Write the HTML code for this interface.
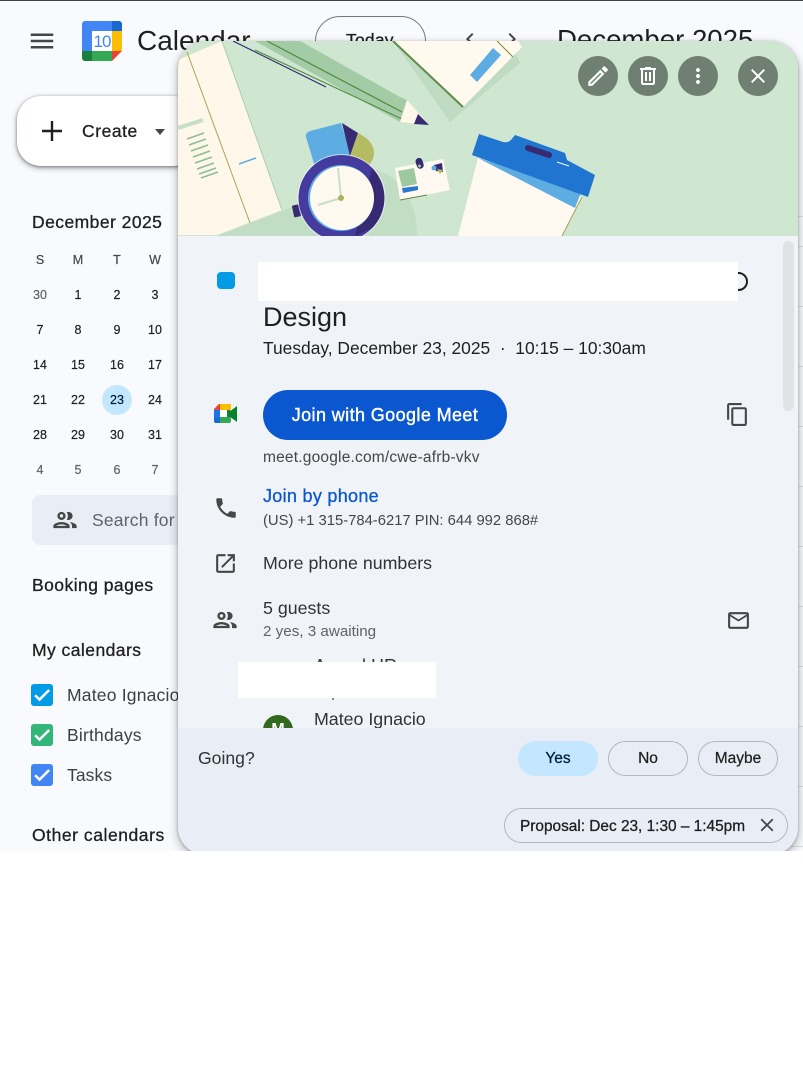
<!DOCTYPE html>
<html><head><meta charset="utf-8"><style>
html,body{margin:0;padding:0;background:#fff;}
body{width:803px;height:1080px;overflow:hidden;position:relative;font-family:"Liberation Sans",sans-serif;color:#1f1f1f;}
#page{position:absolute;left:0;top:0;width:803px;height:851px;overflow:hidden;background:#f8fafd;}
#bar{position:absolute;left:0;top:0;width:803px;height:1px;background:#444;}
.t{position:absolute;white-space:nowrap;line-height:24px;height:24px;}
.m{-webkit-text-stroke:.3px currentColor;}
.c{position:absolute;width:38px;margin-left:-19px;text-align:center;font-size:12.5px;line-height:20px;height:20px;-webkit-text-stroke:.2px currentColor;}
svg.i{position:absolute;}
.ln{position:absolute;left:790px;width:13px;height:1px;background:#dadce0;}
.cb{position:absolute;left:31px;width:22px;height:22px;border-radius:3px;}
.cb svg{position:absolute;left:1px;top:1px;}
#pop{position:absolute;left:178px;top:41px;width:620px;height:814px;border-radius:28px;background:#f0f4f9;overflow:hidden;box-shadow:0 4px 8px 3px rgba(0,0,0,.15),0 1px 3px rgba(0,0,0,.3);}
#in{position:absolute;left:-178px;top:-41px;width:803px;height:900px;}
.rb{position:absolute;width:40px;height:40px;top:56px;border-radius:50%;background:#6f7f72;}
.rb svg{position:absolute;left:8px;top:8px;}
.pill{position:absolute;top:741px;width:78px;height:33px;border:1px solid #b4b8bc;border-radius:18px;text-align:center;font-size:15.5px;line-height:33px;color:#1f1f1f;-webkit-text-stroke:.25px currentColor;}
</style></head><body>
<div id="page">
<div id="bar"></div>
<div class="ln" style="top:216px"></div><div class="ln" style="top:246px"></div><div class="ln" style="top:306px"></div><div class="ln" style="top:366px"></div><div class="ln" style="top:426px"></div><div class="ln" style="top:486px"></div><div class="ln" style="top:546px"></div><div class="ln" style="top:606px"></div><div class="ln" style="top:666px"></div><div class="ln" style="top:726px"></div><div class="ln" style="top:786px"></div><div class="ln" style="top:846px"></div>

<svg class="i" style="left:27px;top:26px" width="30" height="30" viewBox="0 0 24 24" fill="#444746"><path d="M3 18h18v-2H3v2zm0-5h18v-2H3v2zm0-7v2h18V6H3z"/></svg>

<svg class="i" style="left:82px;top:21px" width="40" height="40" viewBox="0 0 40 40">
<path d="M3 0H30V10H10V30H0V3a3 3 0 0 1 3-3z" fill="#4285f4"/>
<path d="M30 0h7a3 3 0 0 1 3 3v7H30z" fill="#1967d2"/>
<rect x="30" y="10" width="10" height="20" fill="#fbbc04"/>
<path d="M10 30H30V40H10z" fill="#34a853"/>
<path d="M0 30H10V40H3a3 3 0 0 1-3-3z" fill="#188038"/>
<path d="M30 30H40L30 40z" fill="#ea4335"/>
<rect x="10" y="10" width="20" height="20" fill="#fff"/>
<text x="20" y="26" font-family="Liberation Sans" font-size="17" fill="#4285f4" text-anchor="middle" letter-spacing="-1">10</text>
</svg>
<div class="t" style="left:137px;top:27px;height:28px;line-height:28px;font-size:28px;color:#1f1f1f">Calendar</div>

<div style="position:absolute;left:315px;top:16px;width:109px;height:60px;border:1px solid #747775;border-radius:25px;"></div>
<div class="t m" style="left:346px;top:28px;font-size:17.5px;letter-spacing:.2px">Today</div>
<svg class="i" style="left:458px;top:27px" width="24" height="24" viewBox="0 0 24 24" fill="#444746"><path d="M15.41 7.41L14 6l-6 6 6 6 1.41-1.41L10.83 12z"/></svg>
<svg class="i" style="left:500px;top:27px" width="24" height="24" viewBox="0 0 24 24" fill="#444746"><path d="M8.59 16.59L10 18l6-6-6-6-1.41 1.41L13.17 12z"/></svg>
<div class="t" style="left:557px;top:26px;font-size:27.6px;line-height:28px;height:28px;">December 2025</div>

<div style="position:absolute;left:17px;top:96px;width:180px;height:70px;border-radius:24px;background:#fff;box-shadow:0 1px 3px rgba(0,0,0,.4),0 2px 6px 1px rgba(0,0,0,.2);"></div>
<svg class="i" style="left:38px;top:117px" width="28" height="28" viewBox="0 0 28 28"><path d="M14 4v20M4 14h20" stroke="#1f1f1f" stroke-width="2.4"/></svg>
<div class="t m" style="left:82px;top:119px;font-size:17.5px;letter-spacing:.55px">Create</div>
<svg class="i" style="left:155px;top:129px" width="10" height="6" viewBox="0 0 10 6"><path d="M0 0h10L5 6z" fill="#444746"/></svg>

<div class="t m" style="left:32px;top:210px;font-size:17.5px;letter-spacing:.45px">December 2025</div>

<div style="position:absolute;left:102px;top:385px;width:30px;height:30px;border-radius:50%;background:#c2e7ff"></div>

<div class="c" style="left:40px;top:250px;color:#444746">S</div><div class="c" style="left:78px;top:250px;color:#444746">M</div><div class="c" style="left:117px;top:250px;color:#444746">T</div><div class="c" style="left:155px;top:250px;color:#444746">W</div>
<div class="c" style="left:40px;top:285px;color:#5f6368">30</div><div class="c" style="left:78px;top:285px">1</div><div class="c" style="left:117px;top:285px">2</div><div class="c" style="left:155px;top:285px">3</div>
<div class="c" style="left:40px;top:320px">7</div><div class="c" style="left:78px;top:320px">8</div><div class="c" style="left:117px;top:320px">9</div><div class="c" style="left:155px;top:320px">10</div>
<div class="c" style="left:40px;top:355px">14</div><div class="c" style="left:78px;top:355px">15</div><div class="c" style="left:117px;top:355px">16</div><div class="c" style="left:155px;top:355px">17</div>
<div class="c" style="left:40px;top:390px">21</div><div class="c" style="left:78px;top:390px">22</div><div class="c" style="left:117px;top:390px;color:#001d35">23</div><div class="c" style="left:155px;top:390px">24</div>
<div class="c" style="left:40px;top:425px">28</div><div class="c" style="left:78px;top:425px">29</div><div class="c" style="left:117px;top:425px">30</div><div class="c" style="left:155px;top:425px">31</div>
<div class="c" style="left:40px;top:460px;color:#5f6368">4</div><div class="c" style="left:78px;top:460px;color:#5f6368">5</div><div class="c" style="left:117px;top:460px;color:#5f6368">6</div><div class="c" style="left:155px;top:460px;color:#5f6368">7</div>

<div style="position:absolute;left:32px;top:495px;width:160px;height:50px;border-radius:8px;background:#e9eef6"></div>
<svg class="i" style="left:51px;top:506px" width="28" height="28" viewBox="0 0 24 24" fill="#444746"><path d="M9 13.75c-2.34 0-7 1.17-7 3.5V19h14v-1.75c0-2.33-4.66-3.5-7-3.5zM4.34 17c.84-.58 2.87-1.25 4.66-1.25s3.82.67 4.66 1.25H4.34zM9 12c1.93 0 3.5-1.57 3.5-3.5S10.93 5 9 5 5.5 6.57 5.5 8.5 7.07 12 9 12zm0-5c.83 0 1.5.67 1.5 1.5S9.83 10 9 10s-1.5-.67-1.5-1.5S8.17 7 9 7zm7.04 6.81c1.16.84 1.96 1.96 1.96 3.44V19h4v-1.75c0-2.02-3.5-3.17-5.96-3.44zM15 12c1.93 0 3.5-1.57 3.5-3.5S16.93 5 15 5c-.54 0-1.04.13-1.5.35.63.89 1 1.98 1 3.15s-.37 2.26-1 3.15c.46.22.96.35 1.5.35z"/></svg>
<div class="t" style="left:92px;top:508px;font-size:17.5px;letter-spacing:.2px;color:#5f6368;">Search for people</div>

<div class="t m" style="left:32px;top:573px;font-size:17.5px;letter-spacing:.45px">Booking pages</div>
<div class="t m" style="left:32px;top:638px;font-size:17.5px;letter-spacing:.45px">My calendars</div>

<div class="cb" style="top:684px;background:#039be5"><svg width="20" height="20" viewBox="0 0 24 24" fill="#fff"><path d="M9 16.17L4.83 12l-1.42 1.41L9 19 21 7l-1.41-1.41z" stroke="#fff"/></svg></div>
<div class="t" style="left:67px;top:683px;font-size:17.5px;letter-spacing:.2px;color:#3c4043">Mateo Ignacio</div>
<div class="cb" style="top:724px;background:#33b679"><svg width="20" height="20" viewBox="0 0 24 24" fill="#fff"><path d="M9 16.17L4.83 12l-1.42 1.41L9 19 21 7l-1.41-1.41z" stroke="#fff"/></svg></div>
<div class="t" style="left:67px;top:723px;font-size:17.5px;letter-spacing:.2px;color:#3c4043">Birthdays</div>
<div class="cb" style="top:764px;background:#4285f4"><svg width="20" height="20" viewBox="0 0 24 24" fill="#fff"><path d="M9 16.17L4.83 12l-1.42 1.41L9 19 21 7l-1.41-1.41z" stroke="#fff"/></svg></div>
<div class="t" style="left:67px;top:763px;font-size:17.5px;letter-spacing:.1px;color:#3c4043">Tasks</div>
<div class="t m" style="left:32px;top:823px;font-size:17.5px;letter-spacing:.55px">Other calendars</div>

<div id="pop"><div id="in">
<svg class="i" style="left:178px;top:41px" width="620" height="195" viewBox="178 41 620 195">
<rect x="178" y="41" width="620" height="195" fill="#cfe6d1"/>
<path d="M217 236L290 208L367 166Q417 180 417 236Z" fill="#c1dec5"/>
<path d="M393 41L450 122L520 63L510 41Z" fill="#bfdcc2"/>
<path d="M178 60L222 41L282 210L217 235H178Z" fill="#fff7ea"/>
<path d="M187 52L250 223" stroke="#a8a552" stroke-width="1"/>
<path d="M222 41L282 210" stroke="#a9cfae" stroke-width="1"/>
<path d="M178 128L203 120" stroke="#c4e0c5" stroke-width="4"/>
<g stroke="#8dbd95" stroke-width="1.6"><path d="M187 139L204 133M189 145L206 139M191 151L208 145M193 157L210 151M195 163L212 157M197 169L214 163M199 174L216 168M201 178L218 172"/></g>
<path d="M239 164L256 158" stroke="#5dade2" stroke-width="1.5"/>
<path d="M300 41L400 97L407 100L400 122L255 41Z" fill="#a3cba6"/>
<path d="M267 41L402 112" stroke="#4d8a3f" stroke-width="1.2"/>
<path d="M255 50L402 119" stroke="#4d8a3f" stroke-width="1"/>
<path d="M233 41L326 87" stroke="#2f2a6b" stroke-width="1.2"/>
<path d="M407 100L400 122L429 125Z" fill="#fff7ea"/>
<path d="M418 114L429 125L414 124Z" fill="#372a73"/>
<path d="M393 41H518L522 47L463 107Z" fill="#fff9ee"/>
<path d="M393 41L463 107" stroke="#5f8c4a" stroke-width="2"/>
<path d="M497 41L513 57" stroke="#8a8b30" stroke-width="1"/>
<path d="M470 75L493 48L501 55L477 82Z" fill="#5dade2"/>
<path d="M306 137Q305 133 310 131L341 123L352 158L316 170Z" fill="#5dade2"/>
<path d="M342 123L358 133L350 156Z" fill="#372a73"/>
<path d="M358 133Q374 141 374 153Q374 160 368 166L350 156Z" fill="#b5bb62"/>
<rect x="293" y="205" width="7" height="12" rx="1" transform="rotate(-12 296 211)" fill="#372a73"/>
<circle cx="341.5" cy="198" r="44" fill="#fff" opacity=".6"/>
<circle cx="341.5" cy="198" r="43" fill="#453a9e"/>
<path d="M372 168A43 43 0 0 1 372 228L355 236Z" fill="#372a73"/>
<circle cx="341" cy="198" r="33" fill="#5dade2"/>
<circle cx="342" cy="198" r="32" fill="#fff9f0"/>
<path d="M338 168L341 198L318 205" fill="none" stroke="#c4e0c5" stroke-width="2"/>
<circle cx="341" cy="198" r="3" fill="#aeb35a"/>
<path d="M395 168L443 159L450 190L400 200Z" fill="#fff9f1"/>
<path d="M400 200L427 195" stroke="#5f8c4a" stroke-width="1"/>
<path d="M398 171L414 168L417 184L402 187Z" fill="#9ec89f"/>
<path d="M402 188L418 186L418 190L403 193Z" fill="#2b78cf"/>
<rect x="416" y="158" width="7" height="11" rx="3.5" transform="rotate(-18 419 163)" fill="#372a73"/>
<circle cx="419.5" cy="166" r="1.5" fill="#9ec89f"/>
<path d="M434 165L442 163L443 172L436 171Z" fill="#372a73"/>
<circle cx="434" cy="168" r="2.5" fill="#5dade2"/>
<path d="M437 169L443 170L440 174Z" fill="#b5bb62"/>
<path d="M478 158L582 197L562 236H458Z" fill="#fff9f1"/>
<path d="M562 236L582 197" stroke="#a8a552" stroke-width="1"/>
<path d="M478 158L582 190L575 208Z" fill="#5dade2"/>
<path d="M479 134L503 142Q508 143 511 140L515 135L565 153L567 160L595 175L588 197L472 155Z" fill="#1f75cf"/>
<path d="M528 148L549 155" stroke="#372a73" stroke-width="6" stroke-linecap="round"/>
<path d="M557 162L569 166" stroke="#fff" stroke-width="1"/>
</svg>

<div class="rb" style="left:578px"><svg width="24" height="24" viewBox="0 0 24 24" fill="#fff" style="overflow:visible"><path transform="translate(-1 -1) scale(1.09)" d="M14.06 9.02l.92.92L5.92 19H5v-.92l9.06-9.06M17.66 3c-.25 0-.51.1-.7.29l-1.83 1.83 3.75 3.75 1.83-1.83c.39-.39.39-1.02 0-1.41l-2.34-2.34c-.2-.2-.45-.29-.71-.29zm-3.6 3.19L3 17.25V21h3.75L17.81 9.94l-3.75-3.75z"/></svg></div>
<div class="rb" style="left:628px"><svg width="24" height="24" viewBox="0 0 24 24" fill="#fff"><path d="M15 4V3H9v1H4v2h1v13c0 1.1.9 2 2 2h10c1.1 0 2-.9 2-2V6h1V4h-5zm2 15H7V6h10v13zM9 8h2v9H9zm4 0h2v9h-2z"/></svg></div>
<div class="rb" style="left:678px"><svg width="24" height="24" viewBox="0 0 24 24" fill="#fff"><path d="M12 8c1.1 0 2-.9 2-2s-.9-2-2-2-2 .9-2 2 .9 2 2 2zm0 2c-1.1 0-2 .9-2 2s.9 2 2 2 2-.9 2-2-.9-2-2-2zm0 6c-1.1 0-2 .9-2 2s.9 2 2 2 2-.9 2-2-.9-2-2-2z"/></svg></div>
<div class="rb" style="left:738px"><svg width="24" height="24" viewBox="0 0 24 24" fill="#fff"><path d="M19 6.41L17.59 5 12 10.59 6.41 5 5 6.41 10.59 12 5 17.59 6.41 19 12 13.41 17.59 19 19 17.59 13.41 12z"/></svg></div>

<div style="position:absolute;left:783px;top:241px;width:11px;height:170px;border-radius:6px;background:#e0e2e5"></div>

<div style="position:absolute;left:217px;top:272px;width:18px;height:17px;border-radius:4px;background:#039be5"></div>
<div style="position:absolute;left:729px;top:272px;width:15px;height:15px;border:2px solid #1f1f1f;border-radius:50%"></div>
<div style="position:absolute;left:258px;top:262px;width:480px;height:39px;background:#fff"></div>

<div class="t" style="left:263px;top:301px;font-size:27px;line-height:32px;height:32px;">Design</div>
<div class="t" style="left:263px;top:336px;font-size:17.4px;">Tuesday, December 23, 2025 &nbsp;·&nbsp; 10:15 – 10:30am</div>

<svg class="i" style="left:214px;top:404px" width="24" height="20" viewBox="0 0 24 20">
<path d="M5 0H17V6H6V6L0 6z" fill="#fbbc04"/>
<path d="M5 0L0 5V6H6V0z" fill="#ea4335"/>
<path d="M0 6H6V14H0z" fill="#1a73e8"/>
<path d="M0 14H6V19H2Q0 19 0 17z" fill="#1967d2"/>
<path d="M6 13H17V17Q17 19 15 19H6z" fill="#34a853"/>
<path d="M15 0Q17 0 17 2V13L13 9V6H6V4H12z" fill="#fbbc04"/>
<path d="M13 6H16V13H13z" fill="#188038"/>
<path d="M15 8L23 2V18L15 12z" fill="#00832d"/>
<rect x="6" y="6" width="7" height="7" fill="#fff"/>
</svg>
<div style="position:absolute;left:263px;top:390px;width:244px;height:50px;border-radius:25px;background:#0b57d0;color:#fff;text-align:center;line-height:50px;font-size:18px;-webkit-text-stroke:.4px #fff;letter-spacing:.4px;">Join with Google Meet</div>
<svg class="i" style="left:725px;top:402px" width="25" height="25" viewBox="0 0 24 24" fill="#444746"><path d="M16 1H4c-1.1 0-2 .9-2 2v14h2V3h12V1zm3 4H8c-1.1 0-2 .9-2 2v14c0 1.1.9 2 2 2h11c1.1 0 2-.9 2-2V7c0-1.1-.9-2-2-2zm0 16H8V7h11v14z"/></svg>
<div class="t" style="left:263px;top:446px;font-size:15.5px;letter-spacing:.2px;color:#444746;">meet.google.com/cwe-afrb-vkv</div>

<svg class="i" style="left:213px;top:495px" width="26" height="26" viewBox="0 0 24 24" fill="#444746"><path d="M6.62 10.79c1.44 2.83 3.76 5.14 6.59 6.59l2.2-2.2c.27-.27.67-.36 1.02-.24 1.12.37 2.33.57 3.57.57.55 0 1 .45 1 1V20c0 .55-.45 1-1 1-9.39 0-17-7.61-17-17 0-.55.45-1 1-1h3.5c.55 0 1 .45 1 1 0 1.25.2 2.45.57 3.57.11.35.03.74-.25 1.02l-2.2 2.2z"/></svg>
<div class="t m" style="left:263px;top:484px;font-size:18px;letter-spacing:.3px;color:#0b57d0;">Join by phone</div>
<div class="t" style="left:263px;top:509px;font-size:14.8px;color:#444746;">(US) +1 315-784-6217 PIN: 644 992 868#</div>

<svg class="i" style="left:213px;top:551px" width="25" height="25" viewBox="0 0 24 24" fill="#444746"><path d="M19 19H5V5h7V3H5c-1.11 0-2 .9-2 2v14c0 1.1.89 2 2 2h14c1.1 0 2-.9 2-2v-7h-2v7zM14 3v2h3.59l-9.83 9.83 1.41 1.41L19 6.41V10h2V3h-7z"/></svg>
<div class="t" style="left:263px;top:551px;font-size:17.8px;color:#303336;">More phone numbers</div>

<svg class="i" style="left:211px;top:606px" width="28" height="28" viewBox="0 0 24 24" fill="#444746"><path d="M9 13.75c-2.34 0-7 1.17-7 3.5V19h14v-1.75c0-2.33-4.66-3.5-7-3.5zM4.34 17c.84-.58 2.87-1.25 4.66-1.25s3.82.67 4.66 1.25H4.34zM9 12c1.93 0 3.5-1.57 3.5-3.5S10.93 5 9 5 5.5 6.57 5.5 8.5 7.07 12 9 12zm0-5c.83 0 1.5.67 1.5 1.5S9.83 10 9 10s-1.5-.67-1.5-1.5S8.17 7 9 7zm7.04 6.81c1.16.84 1.96 1.96 1.96 3.44V19h4v-1.75c0-2.02-3.5-3.17-5.96-3.44zM15 12c1.93 0 3.5-1.57 3.5-3.5S16.93 5 15 5c-.54 0-1.04.13-1.5.35.63.89 1 1.98 1 3.15s-.37 2.26-1 3.15c.46.22.96.35 1.5.35z"/></svg>
<div class="t" style="left:263px;top:596px;font-size:17.8px;color:#303336;">5 guests</div>
<div class="t" style="left:263px;top:620px;font-size:15.2px;color:#5f6368;">2 yes, 3 awaiting</div>
<svg class="i" style="left:726px;top:608px" width="25" height="25" viewBox="0 0 24 24" fill="#444746"><path d="M20 4H4c-1.1 0-1.99.9-1.99 2L2 18c0 1.1.9 2 2 2h16c1.1 0 2-.9 2-2V6c0-1.1-.9-2-2-2zm0 14H4V8l8 5 8-5v10zm-8-7L4 6h16l-8 5z"/></svg>

<div class="t" style="left:314px;top:654px;font-size:18px;color:#303336;">Anand HR</div>
<div style="position:absolute;left:238px;top:662px;width:198px;height:36px;background:#fff"></div>
<div style="position:absolute;left:332px;top:698px;width:2px;height:2px;background:#888"></div>

<div style="position:absolute;left:263px;top:715px;width:30px;height:30px;border-radius:50%;background:#33691e;color:#fff;text-align:center;line-height:30px;font-size:16px;font-weight:700">M</div>
<div class="t" style="left:314px;top:707px;font-size:17.8px;color:#303336;">Mateo Ignacio</div>

<div style="position:absolute;left:178px;top:728px;width:620px;height:130px;background:#e9eef6"></div>
<div class="t" style="left:198px;top:746px;font-size:17.6px;color:#303336;">Going?</div>
<div class="pill" style="left:518px;background:#c2e7ff;border-color:#c2e7ff;color:#001d35">Yes</div>
<div class="pill" style="left:608px">No</div>
<div class="pill" style="left:698px">Maybe</div>
<div style="position:absolute;left:504px;top:808px;width:282px;height:33px;border:1px solid #b4b8bc;border-radius:18px"></div>
<div class="t m" style="left:520px;top:815px;font-size:15.4px;">Proposal: Dec 23, 1:30 – 1:45pm</div>
<svg class="i" style="left:756px;top:814px" width="22" height="22" viewBox="0 0 24 24" fill="#444746"><path d="M19 6.41L17.59 5 12 10.59 6.41 5 5 6.41 10.59 12 5 17.59 6.41 19 12 13.41 17.59 19 19 17.59 13.41 12z"/></svg>
</div></div>
</div>
</body></html>
